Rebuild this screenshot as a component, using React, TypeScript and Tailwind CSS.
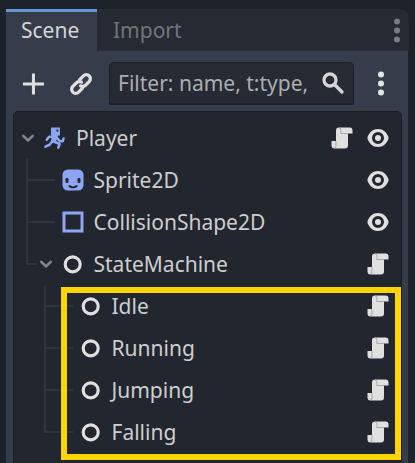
import React from "react";

const Svg = ({ children, className = "" }: { children: React.ReactNode; className?: string }) => (
  <svg viewBox="0 0 16 16" className={`h-6 w-6 shrink-0 ${className}`} fill="none">
    {children}
  </svg>
);

const ScriptIcon = () => (
  <Svg>
    <path fill="#e0e0e0" d="M6 1a2 2 0 0 0-2 2v7H1v3a2 2 0 0 0 2 2h7a2 2 0 0 0 2-2V5h3V3a2 2 0 0 0-2-2z" />
    <path stroke="#a8abad" strokeWidth=".7" d="M6 1.4a1.5 1.5 0 0 1 1.3 1.5V5H12M4 10v3a1.3 1.3 0 0 1-1 1.500" />
  </Svg>
);

const EyeIcon = () => (
  <Svg>
    <path
      fill="#e0e0e0"
      fillRule="evenodd"
      d="M8 2C4.700 2 2.100 4.300 1 7.500v1C2.100 11.700 4.700 14 8 14s5.900-2.300 7-5.500v-1C13.900 4.300 11.300 2 8 2zm0 2a4 4 0 1 1 0 8 4 4 0 0 1 0-8zm0 2a2 2 0 1 0 0 4 2 2 0 0 0 0-4z"
    />
  </Svg>
);

const NodeIcon = () => (
  <Svg>
    <circle cx="7.800" cy="8.200" r="5" stroke="#e0e0e0" strokeWidth="2.100" />
  </Svg>
);

const SpriteIcon = () => (
  <Svg>
    <rect x="1" y="1" width="14" height="14" rx="3.5" fill="#8da5f3" />
    <path stroke="#22262e" strokeWidth="2" strokeLinecap="round" d="M4 7.500v1.500M12 7.500v1.500" />
    <path stroke="#22262e" strokeWidth="1.200" strokeLinecap="round" d="M5.600 12c1.200 1.200 3.600 1.200 4.800 0" />
  </Svg>
);

const ShapeIcon = () => (
  <Svg>
    <rect x="2" y="2" width="12" height="12" stroke="#8da5f3" strokeWidth="2" />
  </Svg>
);

const RunnerIcon = () => (
  <Svg>
    <path fill="#8da5f3" fillRule="evenodd" d="M5.300 1h6v5.400h-6zM9 2.400v1.400h1.200V2.400z" />
    <path fill="#8da5f3" d="M6 6h4l-1.400 5H5.200z" />
    <path
      stroke="#8da5f3"
      strokeWidth="1.700"
      strokeLinecap="round"
      strokeLinejoin="round"
      d="M7 7.200H4L2.500 9.200M9 7.500l2.200 2.700h2l.5-1.900M6 10.500l-1.600 2-2.800 1.300M7.500 10.500l3.600 1.500-.9 2.400"
    />
  </Svg>
);

const Chevron = () => (
  <svg viewBox="0 0 12 8" className="h-2 w-3 shrink-0" fill="none">
    <path d="m1.300 1.900 4.700 4.500 4.700-4.500" stroke="#85888c" strokeWidth="2.500" strokeLinecap="round" />
  </svg>
);

const Dots = ({ className }: { className: string }) => (
  <svg viewBox="0 0 6 25" className={`h-[25px] w-1.5 shrink-0 ${className}`} fill="currentColor">
    <circle cx="3" cy="3.500" r="3" />
    <circle cx="3" cy="12.500" r="3" />
    <circle cx="3" cy="21.500" r="3" />
  </svg>
);

const Branch = ({ last = false, width }: { last?: boolean; width: string }) => (
  <div className={`h-full shrink-0 ${width}`}>
    <div className="h-[22px] border-b-2 border-l-2 border-[#30353d]" />
    {!last && <div className="h-5 border-l-2 border-[#30353d]" />}
  </div>
);

const Row = ({ children, label, right, pad }: { children: React.ReactNode; label: string; right: React.ReactNode; pad: string }) => (
  <div className={`flex h-[42px] items-center pr-[11px] ${pad}`}>
    {children}
    <span className="ml-[9px] flex-1 leading-[42px]">{label}</span>
    <div className="flex gap-3">{right}</div>
  </div>
);

const states = ["Idle", "Running", "Jumping", "Falling"];

export default function App() {
  return (
    <div className="h-[463px] w-[415px] overflow-hidden bg-[#1d2129] pl-1.5 pt-[9px] font-['Noto_Sans',sans-serif] text-[21px] text-[#cdcecf]">
      <div className="flex h-[42px] w-[403px] rounded-tr-[8px] bg-[#252a33]">
        <div className="flex h-full w-[91px] items-center border-t-[3px] border-[#6796d7] bg-[#363d4a] pl-[15px] text-[#d4d5d6]">
          <span className="-mt-px">Scene</span>
        </div>
        <span className="ml-4 flex-1 leading-[42px] text-[#707479]">Import</span>
        <Dots className="mr-[9px] mt-[9px] text-[#787b7f]" />
      </div>
      <div className="h-[412px] w-[402px] bg-[#363d4a] pl-[7px] pt-[11px]">
        <div className="flex h-[43px] items-center">
          <Svg className="ml-2">
            <path stroke="#e0e0e0" strokeWidth="2" d="M8.300 1v14M1.300 8h14" />
          </Svg>
          <Svg className="ml-6">
            <g stroke="#e0e0e0" strokeWidth="2.200" strokeLinecap="round" transform="rotate(-45 8 8)">
              <path d="M6.500 10.700H3a2.700 2.700 0 0 1 0-5.400h3.500a2.700 2.700 0 0 1 2.600 2M9.500 5.300H13a2.700 2.700 0 0 1 0 5.400H9.500a2.700 2.700 0 0 1-2.600-2" />
            </g>
          </Svg>
          <div className="ml-4 flex h-[43px] w-[245px] items-center rounded-t-[5px] border border-b-2 border-[#1c2027] bg-[#252a33] pl-2 text-[#abaeb1]">
            <span className="mt-0.5 flex-1 whitespace-nowrap">Filter: name, t:type,</span>
            <Svg className="mr-2">
              <circle cx="6" cy="6" r="4" stroke="#d4d5d6" strokeWidth="2.200" />
              <path d="m9 9 5 5" stroke="#d4d5d6" strokeWidth="2.200" strokeLinecap="round" />
            </Svg>
          </div>
          <Dots className="ml-6 text-[#e6e6e6]" />
        </div>
        <div className="relative mt-1.5 h-[360px] w-[389px] rounded-t-[5px] border border-[#191d23] bg-[#22262e] pt-[5px]">
          <Row pad="pl-2" label="Player" right={<><ScriptIcon /><EyeIcon /></>}>
            <Chevron />
            <div className="ml-[9px] flex"><RunnerIcon /></div>
          </Row>
          <Row pad="pl-3" label="Sprite2D" right={<EyeIcon />}>
            <Branch width="w-[29px] mr-[5.5px]" />
            <SpriteIcon />
          </Row>
          <Row pad="pl-3" label="CollisionShape2D" right={<EyeIcon />}>
            <Branch width="w-[29px] mr-[5.5px]" />
            <ShapeIcon />
          </Row>
          <Row pad="pl-3" label="StateMachine" right={<ScriptIcon />}>
            <Branch last width="w-[11px] mr-[3px]" />
            <Chevron />
            <div className="ml-[8.5px] flex"><NodeIcon /></div>
          </Row>
          {states.map((s, i) => (
            <Row key={s} pad="pl-[30px]" label={s} right={<ScriptIcon />}>
              <Branch last={i === 3} width="w-[29px] mr-[5.5px]" />
              <NodeIcon />
            </Row>
          ))}
          <div className="pointer-events-none absolute left-[47px] top-[175px] h-[173px] w-[340px] border-[6px] border-[#ffd500]" />
        </div>
      </div>
    </div>
  );
}
